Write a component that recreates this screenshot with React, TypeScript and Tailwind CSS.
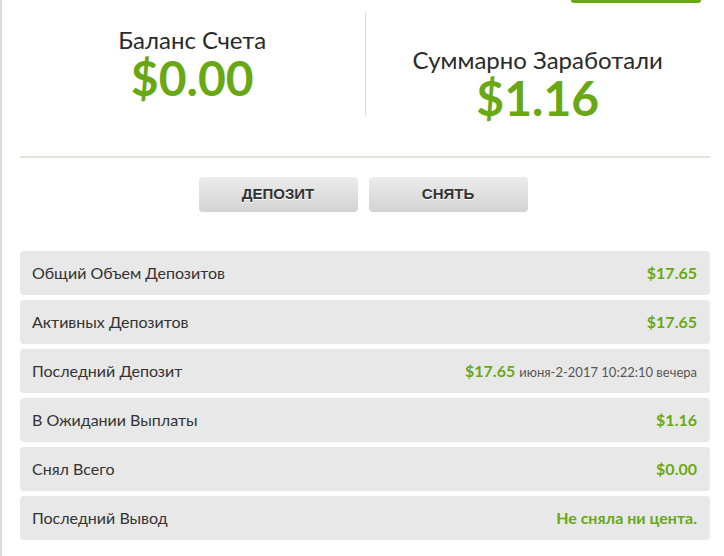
export default function App() {
  const rows: { label: string; value: string; extra?: string }[] = [
    { label: "Общий Объем Депозитов", value: "$17.65" },
    { label: "Активных Депозитов", value: "$17.65" },
    { label: "Последний Депозит", value: "$17.65", extra: "июня-2-2017 10:22:10 вечера" },
    { label: "В Ожидании Выплаты", value: "$1.16" },
    { label: "Снял Всего", value: "$0.00" },
    { label: "Последний Вывод", value: "Не сняла ни цента." },
  ];

  return (
    <div
      className="relative min-h-[556px] w-[724px] overflow-hidden border-l-2 border-[#dcdcdc] bg-white"
      style={{ fontFamily: "Lato, 'Noto Sans', sans-serif" }}
    >
      <div className="absolute left-[569px] top-0 h-[3px] w-[130px] rounded-b-[3px] bg-[#68a815]" />

      <div className="pl-[18px] pr-[14px]">
        <div className="mt-[12px] flex h-[104px]">
          <div className="flex flex-1 flex-col items-center pt-[16px]">
            <div className="text-[24px] leading-[24px] text-[#2a2a2a]">Баланс Счета</div>
            <div className="mt-[3px] text-[48px] font-bold leading-[46px] text-[#68a815]">$0.00</div>
          </div>
          <div className="w-px bg-[#deded0]" />
          <div className="flex flex-1 flex-col items-center pt-[36px]">
            <div className="text-[24px] leading-[24px] text-[#2a2a2a]">Суммарно Заработали</div>
            <div className="mt-[3px] text-[48px] font-bold leading-[46px] text-[#68a815]">$1.16</div>
          </div>
        </div>

        <div className="mt-[40px] h-[2px] bg-[#e4e4d6]" />

        <div className="mt-[19px] flex justify-center gap-[11px] pr-[4px]">
          {["ДЕПОЗИТ", "СНЯТЬ"].map((t) => (
            <button
              key={t}
              className="h-[35px] w-[159px] rounded-[4px] bg-gradient-to-b from-[#ececec] to-[#d3d3d3] text-[15px] font-bold text-[#333]"
              style={{ fontFamily: "'Liberation Sans', Arial, sans-serif", textShadow: "0 1px 0 #fff" }}
            >
              {t}
            </button>
          ))}
        </div>

        <div className="mt-[39px] flex flex-col gap-[5px]">
          {rows.map((r) => (
            <div
              key={r.label}
              className="flex h-[44px] items-center justify-between rounded-[4px] bg-[#e8e8e8] pl-[12px] pr-[13px]"
            >
              <span className="text-[16px] text-[#333]">{r.label}</span>
              <span className="flex items-baseline gap-[4px]">
                <span className="text-[16px] font-bold text-[#68a815]">{r.value}</span>
                {r.extra && <span className="text-[13px] text-[#555]">{r.extra}</span>}
              </span>
            </div>
          ))}
        </div>
      </div>
    </div>
  );
}
